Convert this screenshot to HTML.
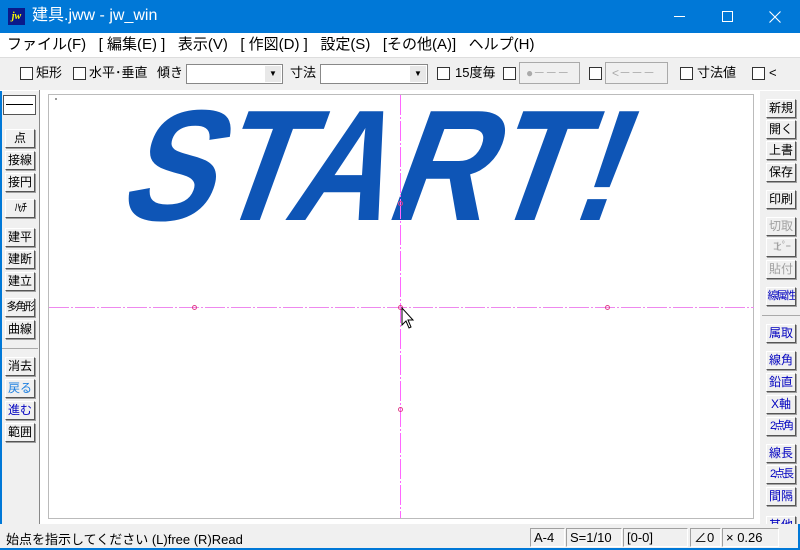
<!DOCTYPE html><html><head><meta charset="utf-8"><style>
*{margin:0;padding:0;box-sizing:border-box}
body{width:800px;height:550px;overflow:hidden;background:#f0f0f0;font-family:"Liberation Sans","Noto Sans CJK JP",sans-serif;font-size:13px;position:relative;color:#000}
.a{position:absolute}
#title{left:0;top:0;width:800px;height:33px;background:#0078d7;color:#fff;font-size:16px}
#menu{left:0;top:33px;width:800px;height:24px;background:#fff;font-size:15px;white-space:pre}
.cb{position:absolute;width:13px;height:13px;border:1px solid #333;background:#fff;top:67px}
.t{position:absolute;top:64px;font-size:13px;line-height:18px;white-space:nowrap}
.btn{position:absolute;width:30px;height:19px;background:#f0f0f0;border:1px solid;border-color:#fff #555 #555 #fff;box-shadow:1px 1px 0 #a0a0a0;font-size:12px;text-align:center;line-height:17px;white-space:nowrap;overflow:hidden}
.n{letter-spacing:-2px;font-size:11px}
.bl{color:#0000c0}.gr{color:#a0a0a0}
.st{position:absolute;top:528px;height:19px;border:1px solid;border-color:#a0a0a0 #fff #fff #a0a0a0;font-size:13px;line-height:17px;padding-left:3px;white-space:nowrap}
</style></head><body>
<div id="title" class="a">
<div class="a" style="left:8px;top:8px;width:17px;height:17px;background:#0a1a8a;color:#ff0;font:italic bold 10px 'Liberation Serif';line-height:17px;text-align:center">jw</div>
<div class="a" style="left:32px;top:6px;line-height:20px">建具.jww - jw_win</div>
<div class="a" style="left:674px;top:16px;width:11px;height:1px;background:#fff"></div>
<div class="a" style="left:722px;top:11px;width:11px;height:11px;border:1px solid #fff"></div>
<svg class="a" style="left:769px;top:11px" width="12" height="12"><path d="M0.5 0.5L11.5 11.5M11.5 0.5L0.5 11.5" stroke="#fff" stroke-width="1.1"/></svg>
</div>
<div id="menu" class="a"><span class="a" style="left:7px;top:2px;line-height:20px">ファイル(F)   [ 編集(E) ]   表示(V)   [ 作図(D) ]   設定(S)   [その他(A)]   ヘルプ(H)</span></div>
<div class="a" style="left:0;top:57px;width:800px;height:1px;background:#ddd"></div>
<div class="cb" style="left:20px"></div><div class="t" style="left:36px">矩形</div>
<div class="cb" style="left:73px"></div><div class="t" style="left:89px">水平･垂直</div>
<div class="t" style="left:157px">傾き</div>
<div class="a" style="left:186px;top:64px;width:97px;height:20px;background:#fff;border:1px solid #888"></div>
<div class="a" style="left:265px;top:66px;width:16px;height:16px;background:#e8e8e8;font-size:8px;text-align:center;line-height:16px">▼</div>
<div class="t" style="left:290px">寸法</div>
<div class="a" style="left:320px;top:64px;width:108px;height:20px;background:#fff;border:1px solid #888"></div>
<div class="a" style="left:410px;top:66px;width:16px;height:16px;background:#e8e8e8;font-size:8px;text-align:center;line-height:16px">▼</div>
<div class="cb" style="left:437px"></div><div class="t" style="left:455px">15度毎</div>
<div class="cb" style="left:503px"></div>
<div class="a" style="left:519px;top:62px;width:61px;height:22px;border:1px solid #aaa;background:#f0f0f0;color:#aaa;font-size:12px;line-height:20px;padding-left:6px">●－－－</div>
<div class="cb" style="left:589px"></div>
<div class="a" style="left:605px;top:62px;width:63px;height:22px;border:1px solid #aaa;background:#f0f0f0;color:#aaa;font-size:12px;line-height:20px;padding-left:6px">&lt;－－－</div>
<div class="cb" style="left:680px"></div><div class="t" style="left:697px">寸法値</div>
<div class="cb" style="left:752px"></div><div class="t" style="left:769px">&lt;</div>
<div class="a" style="left:0;top:90px;width:800px;height:1px;background:#fff"></div>
<div class="a" style="left:39px;top:90px;width:721px;height:434px;background:#fff;border-left:1px solid #888"></div>
<div class="a" style="left:48px;top:94px;width:706px;height:425px;border:1px solid #bbb"></div>
<div class="a" style="left:55px;top:98px;width:2px;height:2px;background:#999"></div>
<svg class="a" style="left:0;top:0" width="800" height="550">
<text x="0" y="0" transform="translate(115,220) skewX(-20)" font-family="Liberation Sans" font-weight="bold" font-size="158" fill="#0e55b6" textLength="498" lengthAdjust="spacingAndGlyphs">START!</text>
<line x1="400.5" y1="95" x2="400.5" y2="518" stroke="#ff66ff" stroke-dasharray="20 2 2 2"/>
<line x1="49" y1="307.5" x2="754" y2="307.5" stroke="#ee88ee" stroke-dasharray="20 2 2 2"/>
<g fill="none" stroke="#e0408a"><circle cx="400.5" cy="203.5" r="2"/><circle cx="194.5" cy="307.5" r="2"/><circle cx="400.5" cy="307.5" r="2"/><circle cx="607.5" cy="307.5" r="2"/><circle cx="400.5" cy="409.5" r="2"/></g>
<path d="M402 308 L402 325 L406 321 L409 328 L411 327 L408 320 L413 320 Z" fill="#fff" stroke="#000" stroke-width="1"/>
</svg>
<div class="a" style="left:0;top:91px;width:2px;height:433px;background:#0078d7"></div>
<div class="a" style="left:3px;top:95px;width:33px;height:20px;background:#fff;border:1px solid #555"><div class="a" style="left:2px;top:8px;width:27px;height:1px;background:#000"></div></div>
<div class="btn" style="left:5px;top:129px">点</div>
<div class="btn" style="left:5px;top:151px">接線</div>
<div class="btn" style="left:5px;top:173px">接円</div>
<div class="btn n" style="left:5px;top:199px">ﾊｯﾁ</div>
<div class="btn" style="left:5px;top:228px">建平</div>
<div class="btn" style="left:5px;top:250px">建断</div>
<div class="btn" style="left:5px;top:272px">建立</div>
<div class="btn n" style="left:5px;top:298px">多角形</div>
<div class="btn" style="left:5px;top:320px">曲線</div>
<div class="a" style="left:2px;top:348px;width:36px;height:1px;background:#aaa"></div>
<div class="btn" style="left:5px;top:357px">消去</div>
<div class="btn" style="left:5px;top:379px;color:#1c7fe0">戻る</div>
<div class="btn bl" style="left:5px;top:401px">進む</div>
<div class="btn" style="left:5px;top:423px">範囲</div>
<div class="btn" style="left:766px;top:99px">新規</div>
<div class="btn" style="left:766px;top:120px">開く</div>
<div class="btn" style="left:766px;top:141px">上書</div>
<div class="btn" style="left:766px;top:163px">保存</div>
<div class="btn" style="left:766px;top:190px">印刷</div>
<div class="btn gr" style="left:766px;top:217px">切取</div>
<div class="btn gr n" style="left:766px;top:238px">ｺﾋﾟｰ</div>
<div class="btn gr" style="left:766px;top:260px">貼付</div>
<div class="btn bl n" style="left:766px;top:287px">線属性</div>
<div class="a" style="left:762px;top:315px;width:38px;height:1px;background:#aaa"></div>
<div class="btn bl" style="left:766px;top:324px">属取</div>
<div class="btn bl" style="left:766px;top:351px">線角</div>
<div class="btn bl" style="left:766px;top:373px">鉛直</div>
<div class="btn bl" style="left:766px;top:395px">X軸</div>
<div class="btn bl n" style="left:766px;top:417px">2点角</div>
<div class="btn bl" style="left:766px;top:444px">線長</div>
<div class="btn bl n" style="left:766px;top:465px">2点長</div>
<div class="btn bl" style="left:766px;top:487px">間隔</div>
<div class="btn bl" style="left:766px;top:516px">其他</div>
<div class="a" style="left:0;top:524px;width:800px;height:26px;background:#f0f0f0"></div>
<div class="a" style="left:6px;top:529px;font-size:13px;white-space:nowrap">始点を指示してください (L)free (R)Read</div>
<div class="st" style="left:530px;width:35px">A-4</div>
<div class="st" style="left:566px;width:56px">S=1/10</div>
<div class="st" style="left:623px;width:65px">[0-0]</div>
<div class="st" style="left:690px;width:31px">∠0</div>
<div class="st" style="left:722px;width:57px">× 0.26</div>
<div class="a" style="left:0;top:548px;width:800px;height:2px;background:#0078d7"></div>
<div class="a" style="left:798px;top:524px;width:2px;height:26px;background:#0078d7"></div>
</body></html>
